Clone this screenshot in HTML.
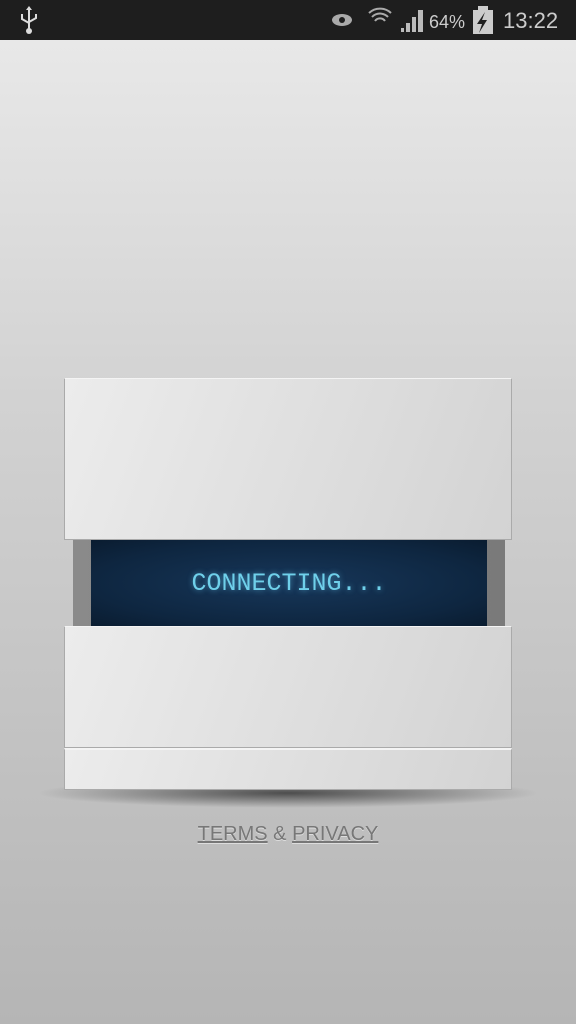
<!DOCTYPE html>
<html><head><style>
body{margin:0;width:576px;height:1024px;overflow:hidden;position:relative;font-family:"Liberation Sans",sans-serif;background:linear-gradient(#e8e8e8 40px,#d2d2d2 400px,#b5b5b5 1024px);}
.sb{position:absolute;left:0;top:0;width:576px;height:40px;background:#1e1e1e;color:#ccc;}
.box{position:absolute;left:64px;width:448px;background:linear-gradient(110deg,#ececec,#d3d3d3);border:1px solid #aaa;border-top-color:#f4f4f4;box-sizing:border-box;}
</style></head><body>
<div class="sb">
<svg width="576" height="40" style="position:absolute;left:0;top:0">
<g stroke="#ddd" stroke-width="2" fill="none"><path d="M29 8V30M22 14v5l7 4M36 14v4l-7 4"/></g>
<circle cx="29" cy="31" r="3" fill="#ddd"/><path d="M26 10l3-4 3 4z" fill="#ddd"/>
<ellipse cx="342" cy="20" rx="10" ry="6" fill="#aaa"/><circle cx="342" cy="20" r="3" fill="#1e1e1e"/>
<g stroke="#aaa" stroke-width="2" fill="none"><path d="M369 13a16 16 0 0 1 22 0M372 17a11 11 0 0 1 16 0M375 21a6 6 0 0 1 10 0"/></g>
<g fill="#bbb"><rect x="401" y="28" width="3" height="4"/><rect x="406" y="23" width="4" height="9"/><rect x="412" y="17" width="4" height="15"/><rect x="418" y="10" width="5" height="22"/></g>
<text x="429" y="28" font-size="18" fill="#ccc" font-family="Liberation Sans">64%</text>
<rect x="473" y="10" width="20" height="24" fill="#ccc"/><rect x="478" y="6" width="10" height="4" fill="#ccc"/>
<path d="M485 12l-8 12h5l-3 9 8-13h-5z" fill="#1e1e1e"/>
<text x="503" y="28" font-size="22" fill="#ccc" font-family="Liberation Sans">13:22</text>
</svg></div>
<div style="position:absolute;left:36px;top:778px;width:504px;height:30px;border-radius:50%;background:radial-gradient(ellipse at center,rgba(0,0,0,.6),rgba(0,0,0,0) 70%);"></div>
<div style="position:absolute;left:73px;top:540px;width:432px;height:86px;background:linear-gradient(90deg,#8a8a8a,#7a7a7a);"></div>
<div style="position:absolute;left:91px;top:540px;width:396px;height:86px;background:radial-gradient(ellipse at center,#17375a,#0e2640 70%,#0a1c30);color:#6fd0ea;font-family:'Liberation Mono',monospace;font-size:25px;text-align:center;line-height:88px;text-shadow:0 0 6px rgba(100,200,240,.6);">CONNECTING...</div>
<div class="box" style="top:378px;height:162px;"></div>
<div class="box" style="top:626px;height:122px;"></div>
<div class="box" style="top:748px;height:42px;border-top:2px solid #f4f4f4;"></div>
<div style="position:absolute;left:0;width:576px;top:823px;text-align:center;font-size:20px;color:#777;text-shadow:0 1px 0 #ddd;"><u>TERMS</u> &amp; <u>PRIVACY</u></div>
</body></html>
